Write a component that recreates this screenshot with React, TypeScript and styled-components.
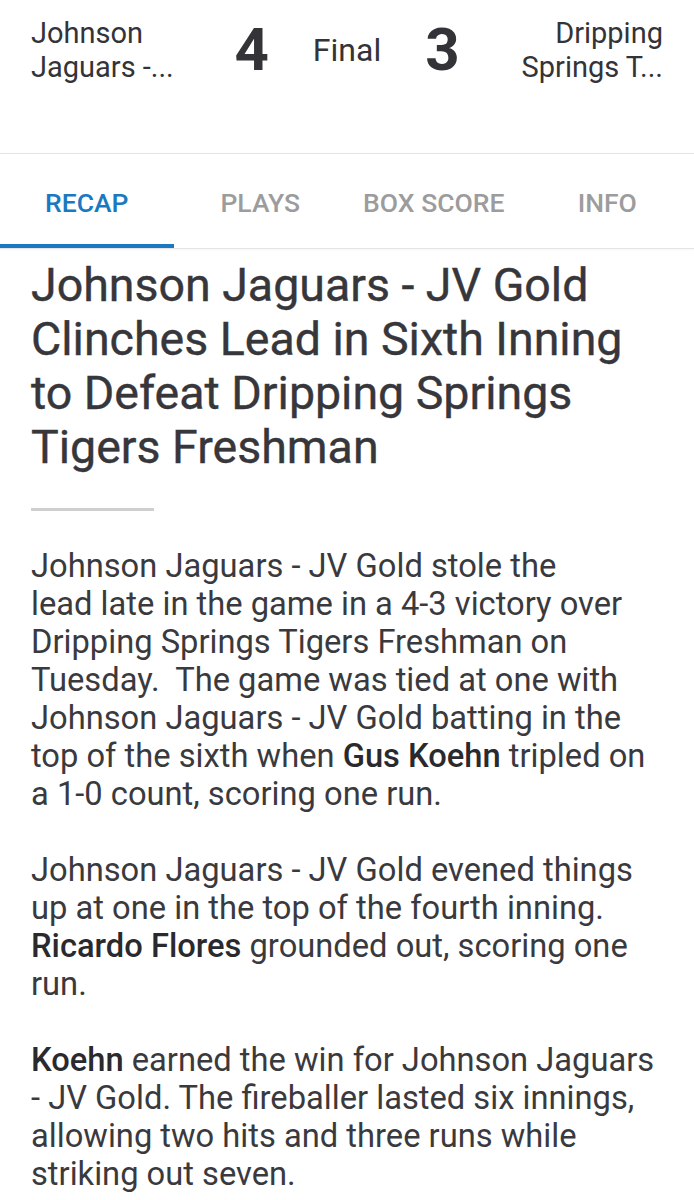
import React from 'react'
import styled, { createGlobalStyle } from 'styled-components'

const GlobalStyle = createGlobalStyle`
  html, body {
    margin: 0;
    padding: 0;
    background: #fff;
  }
  body {
    font-family: Roboto, "Noto Sans", "Liberation Sans", sans-serif;
    color: #38383c;
  }
`

const tabs = ['Recap', 'Plays', 'Box Score', 'Info']

const App = () => {
    return (
        <Page>
            <GlobalStyle />
            <Header>
                <TeamName>
                    <span>Johnson</span>
                    <span>Jaguars -...</span>
                </TeamName>
                <ScoreGroup>
                    <Score>4</Score>
                    <Status>Final</Status>
                    <Score>3</Score>
                </ScoreGroup>
                <TeamName align="right">
                    <span>Dripping</span>
                    <span>Springs T...</span>
                </TeamName>
            </Header>
            <TabBar>
                {tabs.map((t, i) => (
                    <Tab key={t} active={i === 0}>{t}</Tab>
                ))}
            </TabBar>
            <Article>
                <Title>Johnson Jaguars - JV Gold Clinches Lead in Sixth Inning to Defeat Dripping Springs Tigers Freshman</Title>
                <Rule />
                <Paragraph>
                    Johnson Jaguars - JV Gold stole the<br />
                    lead late in the game in a 4-3 victory over Dripping Springs Tigers Freshman on Tuesday.&nbsp; The game was tied at one with Johnson Jaguars - JV Gold batting in the top of the sixth when <b>Gus Koehn</b> tripled on a 1-0 count, scoring one run.
                </Paragraph>
                <Paragraph>
                    Johnson Jaguars - JV Gold evened things up at one in the top of the fourth inning. <b>Ricardo Flores</b> grounded out, scoring one run.
                </Paragraph>
                <Paragraph>
                    <b>Koehn</b> earned the win for Johnson Jaguars - JV Gold. The fireballer lasted six innings, allowing two hits and three runs while striking out seven.
                </Paragraph>
            </Article>
        </Page>
    )
}

const Page = styled.div`
  width: 694px;
  min-height: 1200px;
  background: #fff;
`
const Header = styled.header`
  height: 154px;
  box-sizing: border-box;
  padding: 16px 31px 0;
  border-bottom: 1px solid #e4e4e4;
  display: flex;
  align-items: flex-start;
  justify-content: space-between;
`
const TeamName = styled.div<{ align?: 'left' | 'right' }>`
  width: 150px;
  display: flex;
  flex-direction: column;
  align-items: ${p => (p.align === 'right' ? 'flex-end' : 'flex-start')};
  font-size: 29px;
  line-height: 34px;
  color: #333338;
  white-space: nowrap;
`
const ScoreGroup = styled.div`
  display: flex;
  align-items: center;
  gap: 44px;
  height: 68px;
`
const Score = styled.span`
  font-size: 60px;
  font-weight: 700;
  line-height: 1;
  color: #333338;
`
const Status = styled.span`
  font-size: 32px;
  line-height: 1;
  color: #333338;
`
const TabBar = styled.nav`
  display: grid;
  grid-template-columns: repeat(4, 1fr);
  height: 94px;
  border-bottom: 1px solid #e4e4e4;
  box-shadow: 0 1px 2px rgba(0, 0, 0, 0.04);
`
const Tab = styled.div<{ active?: boolean }>`
  display: flex;
  align-items: center;
  justify-content: center;
  box-sizing: border-box;
  padding-top: 6px;
  height: 94px;
  border-bottom: 4px solid ${p => (p.active ? '#1b79c1' : 'transparent')};
  margin-bottom: -1px;
  font-size: 26.5px;
  font-weight: 500;
  text-transform: uppercase;
  color: ${p => (p.active ? '#1b79c1' : '#9c9c9c')};
`
const Article = styled.article`
  padding: 9px 31px 20px;
`
const Title = styled.h1`
  margin: 0;
  font-size: 46.5px;
  line-height: 54px;
  font-weight: 400;
  color: #36363b;
  -webkit-text-stroke: 0.4px #36363b;
`
const Rule = styled.hr`
  width: 123px;
  height: 3px;
  margin: 34px 0 36px;
  border: 0;
  background: #cfcfcf;
`
const Paragraph = styled.p`
  margin: 0 0 38px;
  font-size: 32.7px;
  line-height: 38px;
  color: #3a3a3e;

  b {
    font-weight: 500;
    color: #2a2a2e;
  }
`

export default App
